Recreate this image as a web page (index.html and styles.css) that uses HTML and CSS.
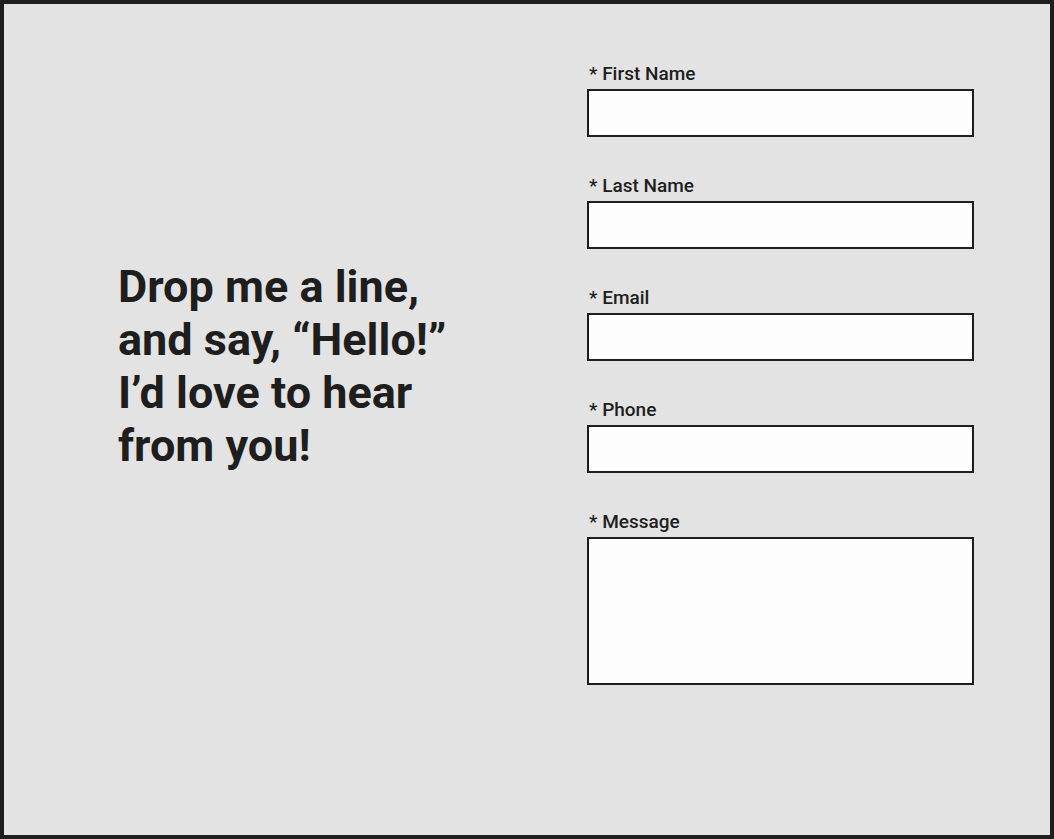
FILE: index.html
```html
<!DOCTYPE html>
<html lang="en">
<head>
<meta charset="utf-8">
<title>Contact</title>
<link rel="stylesheet" href="styles.css">
</head>
<body>
<main class="page">
  <section class="intro">
    <h1 class="headline">Drop me a line,<br>and say, “Hello!”<br>I’d love to hear<br>from you!</h1>
  </section>
  <form class="contact-form">
    <div class="field">
      <label class="field-label" for="first">* First Name</label>
      <input class="field-input" id="first" type="text">
    </div>
    <div class="field">
      <label class="field-label" for="last">* Last Name</label>
      <input class="field-input" id="last" type="text">
    </div>
    <div class="field">
      <label class="field-label" for="email">* Email</label>
      <input class="field-input" id="email" type="email">
    </div>
    <div class="field">
      <label class="field-label" for="phone">* Phone</label>
      <input class="field-input" id="phone" type="tel">
    </div>
    <div class="field">
      <label class="field-label" for="msg">* Message</label>
      <textarea class="field-input field-textarea" id="msg"></textarea>
    </div>
  </form>
</main>
</body>
</html>
```

FILE: styles.css
```css
* {
  box-sizing: border-box;
}

html, body {
  margin: 0;
  padding: 0;
}

body {
  font-family: Roboto, "Liberation Sans", sans-serif;
  color: #1e1e1e;
}

.page {
  height: 839px;
  border: 4px solid #1e1e1e;
  background: #e3e3e3;
  display: grid;
  grid-template-columns: 1fr 1fr;
}

.intro {
  padding: 256px 0 0 114px;
}

.headline {
  margin: 0;
  font-size: 45px;
  line-height: 53px;
  font-weight: 700;
  color: #1e1e1e;
}

.contact-form {
  padding: 59px 0 0 60px;
  display: flex;
  flex-direction: column;
  gap: 38px;
}

.field {
  display: flex;
  flex-direction: column;
  gap: 5px;
}

.field-label {
  padding-left: 2px;
  font-size: 19px;
  line-height: 21px;
  font-weight: 500;
  color: #1e1e1e;
}

.field-input {
  width: 387px;
  height: 48px;
  border: 2px solid #1e1e1e;
  background: #fdfdfd;
  border-radius: 0;
  margin: 0;
  padding: 8px;
  font-family: inherit;
  font-size: 16px;
  outline: none;
}

.field-textarea {
  height: 148px;
  resize: none;
}
```
